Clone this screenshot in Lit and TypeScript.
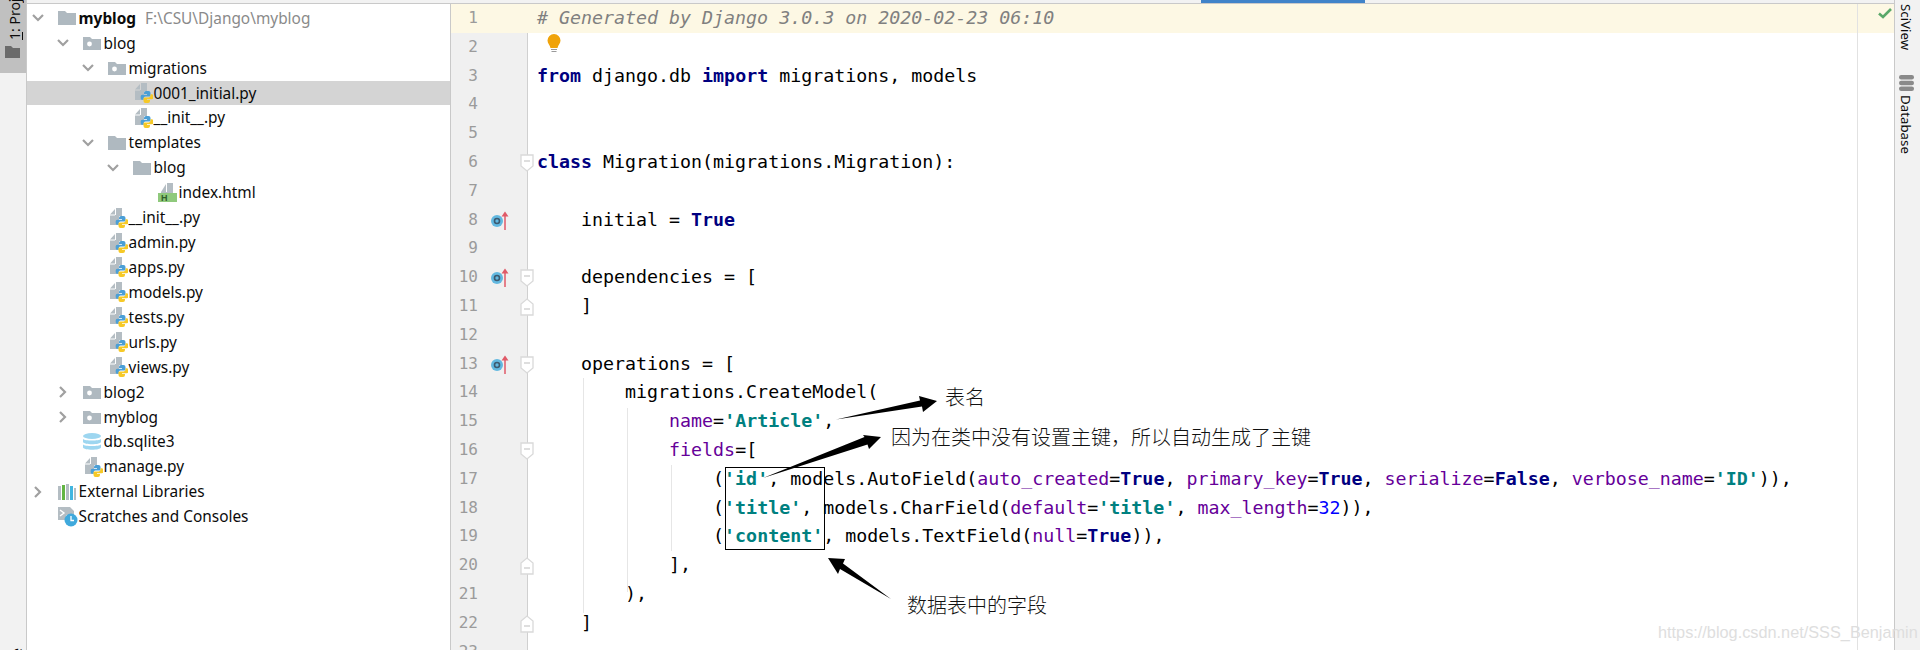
import { LitElement, html, css, svg } from "lit";
import { customElement } from "lit/decorators.js";

type Kind = "folder" | "pkg" | "py" | "html" | "db" | "libs" | "scratch";
interface Row { t: string; d: number; k: Kind; c?: "open" | "closed"; bold?: boolean; path?: string; sel?: boolean; }

const ROWS: Row[] = [
  { t: "myblog", d: 0, k: "folder", c: "open", bold: true, path: "F:\\CSU\\Django\\myblog" },
  { t: "blog", d: 1, k: "pkg", c: "open" },
  { t: "migrations", d: 2, k: "pkg", c: "open" },
  { t: "0001_initial.py", d: 3, k: "py", sel: true },
  { t: "__init__.py", d: 3, k: "py" },
  { t: "templates", d: 2, k: "folder", c: "open" },
  { t: "blog", d: 3, k: "folder", c: "open" },
  { t: "index.html", d: 4, k: "html" },
  { t: "__init__.py", d: 2, k: "py" },
  { t: "admin.py", d: 2, k: "py" },
  { t: "apps.py", d: 2, k: "py" },
  { t: "models.py", d: 2, k: "py" },
  { t: "tests.py", d: 2, k: "py" },
  { t: "urls.py", d: 2, k: "py" },
  { t: "views.py", d: 2, k: "py" },
  { t: "blog2", d: 1, k: "pkg", c: "closed" },
  { t: "myblog", d: 1, k: "pkg", c: "closed" },
  { t: "db.sqlite3", d: 1, k: "db" },
  { t: "manage.py", d: 1, k: "py" },
  { t: "External Libraries", d: 0, k: "libs", c: "closed" },
  { t: "Scratches and Consoles", d: 0, k: "scratch" },
];

const k = (s: string) => html`<span class="kw">${s}</span>`;
const st = (s: string) => html`<span class="str">${s}</span>`;
const a = (s: string) => html`<span class="arg">${s}</span>`;
const n = (s: string) => html`<span class="num">${s}</span>`;

const CODE = [
  html`<span class="cm"># Generated by Django 3.0.3 on 2020-02-23 06:10</span>`,
  html``,
  html`${k("from")} django.db ${k("import")} migrations, models`,
  html``,
  html``,
  html`${k("class")} Migration(migrations.Migration):`,
  html``,
  html`    initial = ${k("True")}`,
  html``,
  html`    dependencies = [`,
  html`    ]`,
  html``,
  html`    operations = [`,
  html`        migrations.CreateModel(`,
  html`            ${a("name")}=${st("'Article'")},`,
  html`            ${a("fields")}=[`,
  html`                (${st("'id'")}, models.AutoField(${a("auto_created")}=${k("True")}, ${a("primary_key")}=${k("True")}, ${a("serialize")}=${k("False")}, ${a("verbose_name")}=${st("'ID'")})),`,
  html`                (${st("'title'")}, models.CharField(${a("default")}=${st("'title'")}, ${a("max_length")}=${n("32")})),`,
  html`                (${st("'content'")}, models.TextField(${a("null")}=${k("True")})),`,
  html`            ],`,
  html`        ),`,
  html`    ]`,
  html``,
];

const FOLD_OPEN = new Set([6, 10, 13, 16]);
const FOLD_END = new Set([11, 20, 22]);
const MARK = new Set([8, 10, 13]);

const pySnakes = svg`
  <path fill="#4b9fd6" d="M11 8h2.5a2 2 0 0 1 2 2v2.5a1 1 0 0 1-1 1h-4a2 2 0 0 0-2 2v1.200H7.200A1.500 1.500 0 0 1 5.700 15.200v-2a1.500 1.500 0 0 1 1.500-1.500h4.800V11H9V10a2 2 0 0 1 2-2z"/>
  <path fill="#f6c927" transform="rotate(180 12 14)" d="M11 8h2.5a2 2 0 0 1 2 2v2.500a1 1 0 0 1-1 1h-4a2 2 0 0 0-2 2v1.200H7.200A1.500 1.500 0 0 1 5.700 15.200v-2a1.500 1.500 0 0 1 1.500-1.500h4.800V11H9V10a2 2 0 0 1 2-2z"/>`;

function icon(kind: Kind) {
  switch (kind) {
    case "folder":
      return html`<svg width="18" height="20" viewBox="0 0 18 20"><path fill="#afb9c0" d="M0 3h7l2 2h9v12H0z"/></svg>`;
    case "pkg":
      return html`<svg width="18" height="20" viewBox="0 0 18 20"><path fill="#afb9c0" d="M0 4h7l2 2h9v11H0z"/><circle cx="6.500" cy="11" r="2.400" fill="#fff"/></svg>`;
    case "py":
      return html`<svg width="18" height="20" viewBox="0 0 18 20" class="shift"><path fill="#b4bdc3" d="M0 6.500 5 1v5.500zM6 0h6v8H8.500V7H6zM0 7.500h5V17H0z"/><path fill="#b4bdc3" d="M5 7h4v10H5z"/>${pySnakes}</svg>`;
    case "html":
      return html`<svg width="20" height="20" viewBox="0 0 20 20"><path fill="#b4bdc3" d="M3 9 8 1v8zM9 0h6v10H3V9h6z"/><rect x="0" y="10" width="19" height="9" fill="#8fc97c"/><text x="3" y="18" font-size="9" font-weight="700" font-family="Liberation Sans, sans-serif" fill="#2f5d2a">H</text></svg>`;
    case "db":
      return html`<svg width="18" height="20" viewBox="0 0 18 20"><g fill="#9dd6f0"><ellipse cx="9" cy="4" rx="9" ry="3"/><path d="M0 7c2 2 16 2 18 0v3c-1 3-17 3-18 0z"/><path d="M0 12.500c2 2 16 2 18 0v3c-1 3-17 3-18 0z"/></g></svg>`;
    case "libs":
      return html`<svg width="18" height="20" viewBox="0 0 18 20"><rect x="0" y="4" width="3" height="14" fill="#b4bdc3"/><rect x="4" y="3" width="3" height="15" fill="#62b543"/><rect x="8" y="2" width="3" height="16" fill="#b4bdc3"/><rect x="12" y="4" width="3" height="14" fill="#40b6e0"/><rect x="16" y="6" width="2" height="12" fill="#b4bdc3"/></svg>`;
    case "scratch":
      return html`<svg width="20" height="20" viewBox="0 0 20 20"><path fill="#b4bdc3" d="M0 0h12l4 4v4H8v5H0z"/><path fill="none" stroke="#fff" stroke-width="1.400" d="M2 3l4 3-4 3"/><circle cx="13" cy="13" r="6.500" fill="#40a9dc"/><path fill="none" stroke="#fff" stroke-width="1.300" d="M13 9v4.500h3"/></svg>`;
  }
}

@customElement("app-root")
export class AppRoot extends LitElement {
  static styles = css`
    :host { display: block; width: 1920px; height: 650px; overflow: hidden; background: #fff; position: relative; font-family: "Noto Sans", "Open Sans", sans-serif; color: #0b0b0b; }
    .app { display: flex; height: 650px; }
    .lstrip { width: 26px; flex: none; background: #f2f2f2; border-right: 1px solid #c9c9c9; display: flex; flex-direction: column; font-size: 14px; position: relative; }
    .tab { height: 73px; background: #c0c0c0; display: flex; flex-direction: column; align-items: center; gap: 6px; }
    .tablabel { writing-mode: vertical-rl; transform: rotate(180deg); height: 40px; overflow: hidden; white-space: nowrap; line-height: 20px; margin-left: 4px; flex: none; }
    .tablabel u { text-decoration: underline; }
    .tabicon { display: block; flex: none; margin-left: -1px; }
    .lstub { position: absolute; left: 7px; top: 648px; writing-mode: vertical-rl; transform: rotate(180deg); white-space: nowrap; font-size: 14px; line-height: 20px; }

    .center { flex: 1; display: flex; flex-direction: column; min-width: 0; }
    .topline { height: 3px; background: #f2f2f2; border-bottom: 1px solid #c9c9c9; flex: none; display: flex; padding-left: 1174px; }
    .bluetab { width: 164px; height: 3px; background: #4083c9; }
    .panels { flex: 1; display: flex; min-height: 0; }

    .tree { width: 423px; flex: none; padding-top: 1.800px; border-right: 1px solid #c9c9c9; box-sizing: content-box; background: #fff; }
    .row { height: 24.930px; display: flex; align-items: center; font-size: 15.400px; white-space: nowrap; }
    .row.sel { background: #d4d4d4; }
    .chev { width: 25px; flex: none; display: flex; justify-content: center; margin-left: -2px; margin-right: 8px; }
    .chev svg { display: block; }
    .ic { width: 18px; height: 20px; flex: none; margin-right: 2.600px; display: flex; align-items: center; }
    .ic svg { display: block; flex: none; }
    .ic svg.shift { margin-left: 2px; }
    .bold { font-weight: 700; }
    .path { color: #8a8a8a; margin-left: 9px; }

    .editor { flex: 1; min-width: 0; position: relative; }
    .line { height: 28.800px; display: flex; }
    .line.cur { background: #fdf8e4; }
    .gutter { width: 77px; flex: none; background: #f0f0f0; border-right: 1px solid #d0d0d0; position: relative; color: #9b9b9b; font: 16px/28.800px "DejaVu Sans Mono", monospace; box-sizing: border-box; }
    .line.cur .gutter { background: #fdf8e4; border-right-color: transparent; }
    .numb { width: 27px; text-align: right; display: block; }
    .mark { position: absolute; left: 39px; top: 4px; display: block; }
    .fold { position: absolute; left: 69px; top: 6px; display: block; }
    .code { padding-left: 9px; white-space: pre; font: 18.300px/28.800px "DejaVu Sans Mono", monospace; color: #000; }
    .cm { color: #808080; font-style: italic; }
    .kw { color: #000080; font-weight: 700; }
    .str { color: #008080; font-weight: 700; }
    .arg { color: #660099; }
    .num { color: #0000ff; }
    .guide { position: absolute; width: 1px; background: #e6e6e6; }
    .g1 { left: 132px; top: 374px; height: 235px; }
    .g2 { left: 176px; top: 404px; height: 184px; }
    .g3 { left: 220px; top: 461px; height: 86px; }
    .stripe { position: absolute; top: 0; bottom: 0; right: 0; width: 37px; border-left: 1px solid #e2e2e2; box-sizing: border-box; display: flex; justify-content: flex-end; padding: 4px 2px 0 0; }
    .stripe svg { display: block; }
    .bulb { position: absolute; left: 94px; top: 30px; display: block; }

    .rstrip { width: 25px; flex: none; background: #f2f2f2; border-left: 1px solid #c9c9c9; display: flex; flex-direction: column; align-items: center; font-size: 13.300px; padding-top: 4px; gap: 25px; }
    .rlabel { writing-mode: vertical-rl; white-space: nowrap; line-height: 20px; margin-right: 3px; }
    .dbwrap { display: flex; flex-direction: column; align-items: center; gap: 4px; }
    .dbicon { display: block; flex: none; margin-right: 3px; }

    .overlay { position: absolute; left: 0; top: 0; pointer-events: none; display: block; }
    .box { position: absolute; left: 725px; top: 467px; width: 98px; height: 81px; border: 1.500px solid #000; box-sizing: content-box; }
    .note { position: absolute; font: 300 20px/28px "Noto Sans CJK SC", sans-serif; color: #111; white-space: nowrap; }
    .n1 { left: 945px; top: 383px; }
    .n2 { left: 891px; top: 423px; }
    .n3 { left: 907px; top: 591px; }
    .wm { position: absolute; left: 1658px; top: 622px; font: 16.300px/20px "Liberation Sans", sans-serif; color: #dedede; white-space: nowrap; }
  `;

  private row(r: Row) {
    const chev = r.c === "open"
      ? html`<svg width="12" height="8" viewBox="0 0 12 8"><path d="M1 1l5 5 5-5" fill="none" stroke="#a0a0a0" stroke-width="2.200"/></svg>`
      : r.c === "closed"
      ? html`<svg width="8" height="12" viewBox="0 0 8 12"><path d="M1 1l5 5-5 5" fill="none" stroke="#a0a0a0" stroke-width="2.200"/></svg>`
      : null;
    return html`<div class="row ${r.sel ? "sel" : ""}">
      <span style="width:${25 * r.d}px;flex:none"></span>
      <span class="chev">${chev}</span>
      <span class="ic">${icon(r.k)}</span>
      <span class="${r.bold ? "bold" : ""}">${r.t}</span>
      ${r.path ? html`<span class="path">${r.path}</span>` : null}
    </div>`;
  }

  private line(c: unknown, i: number) {
    const no = i + 1;
    return html`<div class="line ${no === 1 ? "cur" : ""}">
      <div class="gutter">
        <span class="numb">${no}</span>
        ${MARK.has(no) ? html`<svg class="mark" width="22" height="21" viewBox="0 0 22 21"><circle cx="7" cy="11" r="6" fill="#62b8e0"/><circle cx="7" cy="11" r="2.500" fill="none" stroke="#3d5a70" stroke-width="1.600"/><path d="M15 20V4" stroke="#e05a68" stroke-width="1.500"/><path d="M11.500 6.500 15 1.500l3.500 5z" fill="#e05a68"/></svg>` : null}
        ${FOLD_OPEN.has(no) ? html`<svg class="fold" width="15" height="18" viewBox="0 0 15 18"><path d="M1 1h12v11l-6 5-6-5z" fill="#fff" stroke="#d9d9d9" stroke-width="1.300"/><path d="M4 7h6" stroke="#c8c8c8" stroke-width="1.200"/></svg>` : null}
        ${FOLD_END.has(no) ? html`<svg class="fold" width="15" height="18" viewBox="0 0 15 18"><path d="M1 17h12V6L7 1 1 6z" fill="#fff" stroke="#d9d9d9" stroke-width="1.300"/><path d="M4 11h6" stroke="#c8c8c8" stroke-width="1.200"/></svg>` : null}
      </div>
      <div class="code">${c}</div>
    </div>`;
  }

  render() {
    return html`
      <div class="app">
        <div class="lstrip">
          <div class="tab">
            <span class="tablabel"><u>1</u>: Project</span>
            <svg class="tabicon" width="15" height="12" viewBox="0 0 15 12"><path fill="#6b6b6b" d="M0 0h6l2 2h7v10H0z"/></svg>
          </div>
          <span class="lstub">2: Structure</span>
        </div>
        <div class="center">
          <div class="topline"><div class="bluetab"></div></div>
          <div class="panels">
            <div class="tree">${ROWS.map((r) => this.row(r))}</div>
            <div class="editor">
              ${CODE.map((c, i) => this.line(c, i))}
              <span class="guide g1"></span><span class="guide g2"></span><span class="guide g3"></span>
              <div class="stripe">
                <svg width="14" height="11" viewBox="0 0 14 11"><path d="M1 5.500l4 3.500 8-8" fill="none" stroke="#59a869" stroke-width="2.600"/></svg>
              </div>
              <svg class="bulb" width="18" height="20" viewBox="0 0 18 20"><path fill="#f0a30a" d="M9 0a6.500 6.500 0 0 1 6.500 6.500c0 3-2.500 4.500-3 7.500h-7c-.5-3-3-4.500-3-7.500A6.500 6.500 0 0 1 9 0z"/><path d="M6 15.500h6M6.500 17.500h5" stroke="#9a9a9a" stroke-width="1.200"/></svg>
            </div>
          </div>
        </div>
        <div class="rstrip">
          <span class="rlabel">SciView</span>
          <div class="dbwrap">
            <svg class="dbicon" width="15" height="16" viewBox="0 0 15 16"><g fill="#8a8a8a"><rect x="0" y="0" width="15" height="4.500" rx="2.200"/><rect x="0" y="5.700" width="15" height="4.500" rx="2.200"/><rect x="0" y="11.400" width="15" height="4.500" rx="2.200"/></g></svg>
            <span class="rlabel">Database</span>
          </div>
        </div>
      </div>
      <svg class="overlay" width="1920" height="650" viewBox="0 0 1920 650">
        <path fill="#000" d="M836 419.500 920 400.500 919 396 937 401 923 412 922 406.500z"/>
        <path fill="#000" d="M763 478 864.500 437 863 435 881 437 869 449 867.500 444.500z"/>
        <path fill="#000" d="M891 599 840 569 838 574 828 558 845 559 843 563.500z"/>
      </svg>
      <div class="box"></div>
      <span class="note n1">表名</span>
      <span class="note n2">因为在类中没有设置主键，所以自动生成了主键</span>
      <span class="note n3">数据表中的字段</span>
      <span class="wm">https://blog.csdn.net/SSS_Benjamin</span>
    `;
  }
}
